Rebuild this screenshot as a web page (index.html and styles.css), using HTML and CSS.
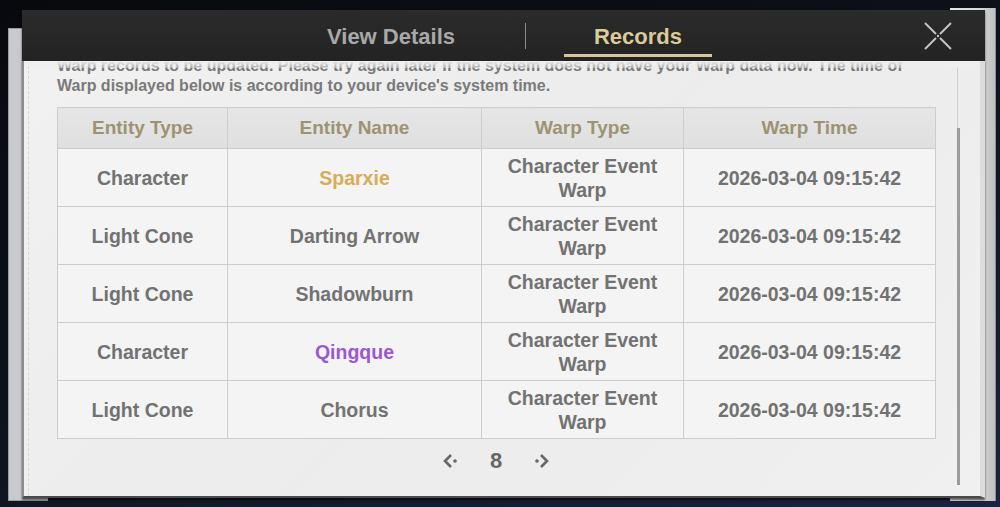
FILE: index.html
```html
<!DOCTYPE html>
<html lang="en">
<head>
    <meta charset="UTF-8">
    <meta name="viewport" content="width=device-width, initial-scale=1.0">
    <title>Warp Records</title>
    <link rel="stylesheet" href="styles.css">
</head>
<body>
    <div class="scene">
        <!-- paper sheets stacked behind the panel -->
        <div class="sheet-back"></div>
        <div class="sheet-edge"></div>

        <section class="panel">
            <header class="panel-head">
                <div class="tab">View Details</div>
                <div class="tab-divider"></div>
                <div class="tab active">Records</div>
                <button class="close" type="button" aria-label="Close">
                    <svg width="30" height="30" viewBox="0 0 30 30">
                        <path d="M2 2 L13 13 M17 17 L28 28 M28 2 L17 13 M13 17 L2 28" stroke="#c2c2c2" stroke-width="2" fill="none"/>
                        <circle cx="15" cy="15" r="1.2" fill="#c2c2c2"/>
                    </svg>
                </button>
            </header>

            <div class="panel-body">
                <div class="content">
                    <p class="note">Warp records to be updated. Please try again later if the system does not have your Warp data now. The time of Warp displayed below is according to your device's system time.</p>

                    <table class="records">
                        <colgroup>
                            <col style="width:170px">
                            <col style="width:254px">
                            <col style="width:202px">
                            <col style="width:252px">
                        </colgroup>
                        <thead>
                            <tr>
                                <th>Entity Type</th>
                                <th>Entity Name</th>
                                <th>Warp Type</th>
                                <th>Warp Time</th>
                            </tr>
                        </thead>
                        <tbody>
                            <tr>
                                <td>Character</td>
                                <td class="rank-5">Sparxie</td>
                                <td>Character Event<br>Warp</td>
                                <td>2026-03-04 09:15:42</td>
                            </tr>
                            <tr>
                                <td>Light Cone</td>
                                <td>Darting Arrow</td>
                                <td>Character Event<br>Warp</td>
                                <td>2026-03-04 09:15:42</td>
                            </tr>
                            <tr>
                                <td>Light Cone</td>
                                <td>Shadowburn</td>
                                <td>Character Event<br>Warp</td>
                                <td>2026-03-04 09:15:42</td>
                            </tr>
                            <tr>
                                <td>Character</td>
                                <td class="rank-4">Qingque</td>
                                <td>Character Event<br>Warp</td>
                                <td>2026-03-04 09:15:42</td>
                            </tr>
                            <tr>
                                <td>Light Cone</td>
                                <td>Chorus</td>
                                <td>Character Event<br>Warp</td>
                                <td>2026-03-04 09:15:42</td>
                            </tr>
                        </tbody>
                    </table>

                    <nav class="pager">
                        <button class="pager-btn" type="button" aria-label="Previous page">
                            <svg width="16" height="16" viewBox="0 0 16 16">
                                <path d="M8 2 L2 8 L8 14" stroke="#666" stroke-width="2.6" fill="none"/>
                                <circle cx="12" cy="8" r="1.8" fill="#666"/>
                            </svg>
                        </button>
                        <span class="pager-num">8</span>
                        <button class="pager-btn" type="button" aria-label="Next page">
                            <svg width="16" height="16" viewBox="0 0 16 16">
                                <path d="M8 2 L14 8 L8 14" stroke="#666" stroke-width="2.6" fill="none"/>
                                <circle cx="4" cy="8" r="1.8" fill="#666"/>
                            </svg>
                        </button>
                    </nav>
                </div>

                <div class="scrollbar"><div class="scroll-thumb"></div></div>
            </div>
        </section>
    </div>
</body>
</html>
```

FILE: styles.css
```css
* {
    box-sizing: border-box;
}

body {
    margin: 0;
    font-family: "Liberation Sans", Arial, sans-serif;
    background: linear-gradient(160deg, #07090e 0%, #0d1119 45%, #1a2440 100%);
    width: 1000px;
    height: 507px;
    overflow: hidden;
}

.scene {
    position: relative;
    width: 1000px;
    height: 507px;
    padding: 10px 15px 9px 22px;
}

.sheet-back {
    position: absolute;
    left: 8px;
    top: 28px;
    width: 40px;
    bottom: 6px;
    background: #c9cacd;
    border: 1px solid #9a9ca0;
    border-right: none;
}

.sheet-edge {
    position: absolute;
    left: 950px;
    top: 8px;
    width: 46px;
    bottom: 6px;
    background: linear-gradient(90deg, #e6e6e6 0%, #d9d9d9 60%, #bfc0c2 100%);
    border-right: 1px solid #8e9094;
}

.panel {
    position: relative;
    height: 488px;
    display: flex;
    flex-direction: column;
    box-shadow: 0 2px 2px rgba(0, 0, 0, 0.6);
}

.panel-head {
    height: 51px;
    flex-shrink: 0;
    display: flex;
    align-items: center;
    padding-left: 295px;
    background: linear-gradient(180deg, #2b2b2b 0%, #232323 100%);
}

.tab {
    width: 148px;
    height: 51px;
    display: flex;
    align-items: center;
    justify-content: center;
    font-size: 22px;
    font-weight: bold;
    color: #a9a9a9;
    padding-top: 3px;
}

.tab.active {
    color: #dccb9a;
    box-shadow: inset 0 -4px 0 #232323, inset 0 -7px 0 #d7c69a;
}

.tab-divider {
    width: 1px;
    height: 26px;
    background: #8a8a8a;
    margin: 0 38px 0 60px;
}

.close {
    margin-left: auto;
    margin-right: 32px;
    width: 30px;
    height: 30px;
    padding: 0;
    border: none;
    background: none;
    cursor: pointer;
}

.panel-body {
    position: relative;
    flex: 1;
    overflow: hidden;
    background: linear-gradient(135deg, #f1f1f1 0%, #ececec 50%, #f0f0f0 100%);
    border-left: 2px solid #8c8c8c;
    border-right: 5px solid #dcdcdc;
    border-bottom: 2px solid #4a4a4a;
}

.panel-body::before {
    content: "";
    position: absolute;
    left: 4px;
    top: 0;
    bottom: 0;
    border-left: 1px dashed #d6d6d6;
}

.panel-body::after {
    content: "";
    position: absolute;
    left: 0;
    right: 0;
    top: 0;
    height: 7px;
    background: linear-gradient(180deg, #efefef 0%, rgba(239, 239, 239, 0.4) 100%);
}

.content {
    padding-left: 33px;
    width: 913px;
}

.note {
    margin: -5px 0 11px 0;
    width: 878px;
    font-size: 16px;
    line-height: 20px;
    font-weight: bold;
    color: #7a7a7a;
}

.records {
    width: 878px;
    table-layout: fixed;
    border-collapse: collapse;
    border: 1px solid #c4c4c4;
}

.records th,
.records td {
    border: 1px solid #cdcdcd;
    text-align: center;
    font-weight: bold;
    padding: 0 4px;
}

.records th {
    height: 41px;
    background: linear-gradient(180deg, #e6e6e6 0%, #dfdfdf 100%);
    color: #9d9372;
    font-size: 19px;
}

.records td {
    height: 58px;
    background: #f4f4f4;
    color: #727272;
    font-size: 19.5px;
    line-height: 24px;
}

.records td.rank-5 {
    color: #d8ad57;
}

.records td.rank-4 {
    color: #9b58d3;
}

.pager {
    display: flex;
    align-items: center;
    justify-content: center;
    width: 878px;
    height: 44px;
    gap: 30px;
}

.pager-btn {
    width: 18px;
    height: 18px;
    padding: 0;
    border: none;
    background: none;
    display: flex;
    align-items: center;
    justify-content: center;
    cursor: pointer;
}

.pager-num {
    font-size: 22px;
    font-weight: bold;
    color: #666;
}

.scrollbar {
    position: absolute;
    right: 20px;
    top: 6px;
    bottom: 11px;
    width: 3px;
    border-left: 1px solid #cfcfcf;
}

.scroll-thumb {
    position: absolute;
    left: -1px;
    right: 0;
    top: 61px;
    bottom: 0;
    background: #9c9c9c;
}
```
